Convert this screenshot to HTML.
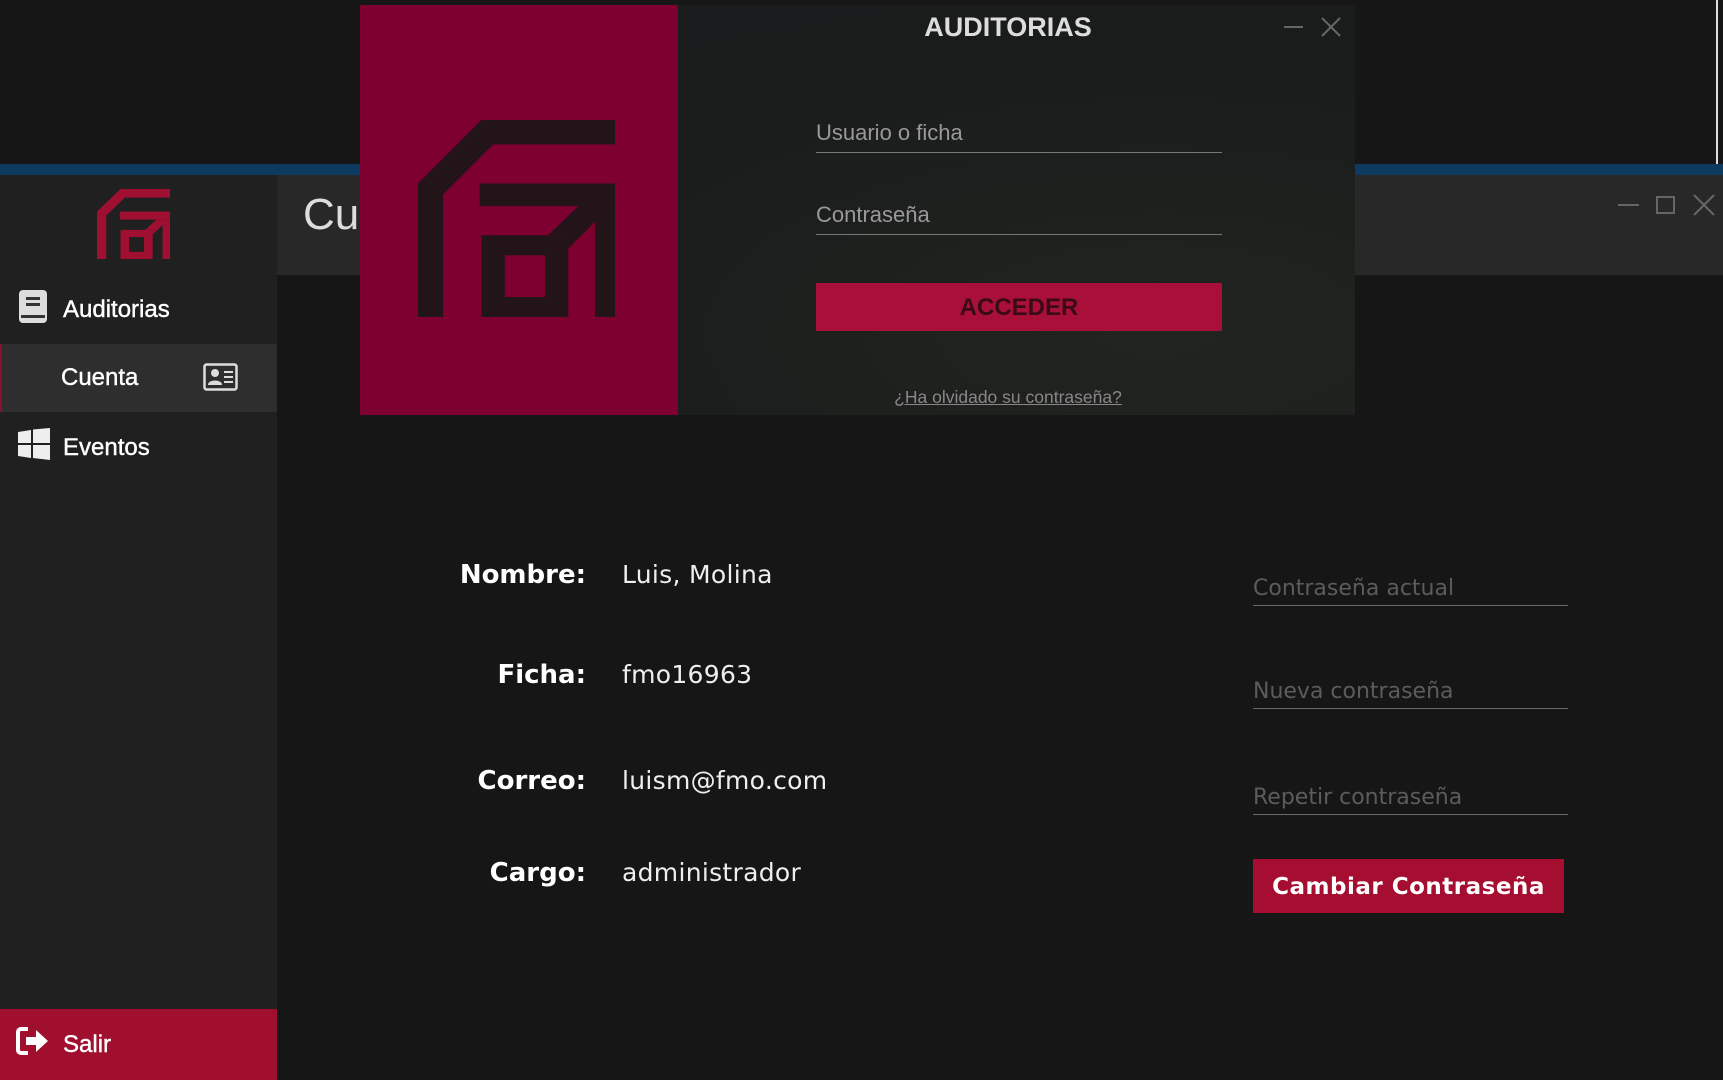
<!DOCTYPE html>
<html><head><meta charset="utf-8"><style>
*{margin:0;padding:0;box-sizing:border-box}
body{width:1723px;height:1080px;background:#161616;position:relative;overflow:hidden;font-family:"Liberation Sans",sans-serif}
.abs{position:absolute}
.lbl{position:absolute;right:1137px;font-family:"DejaVu Sans",sans-serif;font-weight:bold;font-size:26px;color:#fff;line-height:30px}
.val{position:absolute;left:622px;font-family:"DejaVu Sans",sans-serif;font-size:25px;color:#eee;line-height:30px;letter-spacing:0.3px}
.inp{position:absolute;left:1253px;width:315px;border-bottom:1.5px solid #6a6a6a;font-family:"DejaVu Sans",sans-serif;font-size:22px;color:#5c5c5c;line-height:28px;padding-bottom:2px;padding-top:3px}
.nav{position:absolute;left:0;width:277px;color:#fff;font-size:24px;-webkit-text-stroke:0.4px #fff}
</style></head><body>
<svg width="0" height="0" style="position:absolute"><defs><g id="lg">
<polygon points="0,190 190,0 590,0 590,73 225,73 75,223 75,590 0,590"/>
<rect x="185" y="190" width="405" height="68"/>
<path fill-rule="evenodd" d="M190 345H450V590H190Z M260 405V530H380V405Z"/>
<polygon points="390,345 480,258 590,258 590,590 530,590 530,305 450,385 450,345"/>
</g></defs></svg>
<div class="abs" style="left:0;top:0;width:1723px;height:165px;background:#161616"></div>
<div class="abs" style="left:1716px;top:0;width:2px;height:165px;background:#ddd"></div>
<div class="abs" style="left:0;top:164px;width:1723px;height:11px;background:#0e3a60"></div>
<!-- sidebar -->
<div class="abs" style="left:0;top:175px;width:277px;height:905px;background:#202020"></div>
<svg class="abs" style="left:97px;top:189px" width="73" height="70" viewBox="0 0 590 590" preserveAspectRatio="none"><use href="#lg" fill="#9e0f31"/></svg>
<svg class="abs" style="left:18px;top:289px" width="32" height="36" viewBox="0 0 32 36"><rect x="1" y="1" width="28" height="33" rx="4" fill="#ddd"/><rect x="8" y="8" width="14" height="3" fill="#333"/><rect x="8" y="14" width="14" height="3" fill="#333"/><rect x="3" y="26" width="24" height="3" fill="#333"/></svg>
<div class="nav" style="left:63px;top:296px">Auditorias</div>
<div class="abs" style="left:0;top:344px;width:277px;height:68px;background:#2e2e2e;border-left:2px solid #8a1030"></div>
<div class="nav" style="left:61px;top:364px">Cuenta</div>
<svg class="abs" style="left:203px;top:363px" width="35" height="28" viewBox="0 0 35 28"><rect x="1.5" y="1.5" width="32" height="25" rx="2" fill="none" stroke="#ddd" stroke-width="2.5"/><circle cx="12" cy="10" r="4" fill="#ddd"/><path d="M5 22c0-6 14-6 14 0z" fill="#ddd"/><rect x="21" y="8" width="9" height="2" fill="#ddd"/><rect x="21" y="13" width="9" height="2" fill="#ddd"/><rect x="21" y="18" width="9" height="2" fill="#ddd"/></svg>
<svg class="abs" style="left:18px;top:428px" width="32" height="32" viewBox="0 0 32 32" fill="#eee"><polygon points="0,4 13,2 13,15 0,15"/><polygon points="15,1.5 32,0 32,15 15,15"/><polygon points="0,17 13,17 13,30 0,28"/><polygon points="15,17 32,17 32,32 15,30"/></svg>
<div class="nav" style="left:63px;top:434px">Eventos</div>
<div class="abs" style="left:0;top:1009px;width:277px;height:71px;background:#a0102e"></div>
<svg class="abs" style="left:16px;top:1026px" width="34" height="30" viewBox="0 0 34 30"><path d="M12 3H5a3 3 0 0 0-3 3v18a3 3 0 0 0 3 3h7" fill="none" stroke="#fff" stroke-width="4"/><path d="M10 11h10V4l12 11-12 11v-7H10z" fill="#fff"/></svg>
<div class="nav" style="left:63px;top:1031px">Salir</div>
<!-- header -->
<div class="abs" style="left:277px;top:175px;width:1446px;height:100px;background:#282828"></div>
<div class="abs" style="left:303px;top:190px;font-size:44px;color:#ddd">Cuenta</div>
<div class="abs" style="left:1618px;top:204px;width:21px;height:2px;background:#666"></div>
<div class="abs" style="left:1656px;top:196px;width:19px;height:18px;border:2px solid #666"></div>
<svg class="abs" style="left:1693px;top:194px" width="22" height="22"><path d="M1 1L21 21M21 1L1 21" stroke="#666" stroke-width="2"/></svg>
<!-- form -->
<div class="lbl" style="top:560px">Nombre:</div><div class="val" style="top:560px">Luis, Molina</div>
<div class="lbl" style="top:660px">Ficha:</div><div class="val" style="top:660px">fmo16963</div>
<div class="lbl" style="top:766px">Correo:</div><div class="val" style="top:766px">luism@fmo.com</div>
<div class="lbl" style="top:858px">Cargo:</div><div class="val" style="top:858px">administrador</div>
<div class="inp" style="top:572px">Contraseña actual</div>
<div class="inp" style="top:675px">Nueva contraseña</div>
<div class="inp" style="top:781px">Repetir contraseña</div>
<div class="abs" style="left:1253px;top:859px;width:311px;height:54px;background:#a50d31;color:#fff;font-family:'DejaVu Sans',sans-serif;font-weight:bold;font-size:23px;text-align:center;line-height:56px;letter-spacing:0.5px">Cambiar Contraseña</div>
<!-- login overlay -->
<div class="abs" style="left:360px;top:5px;width:995px;height:410px;background:radial-gradient(ellipse at 80% 80%,#222420,#1a1c1c 60%,#181a1b)"></div>
<div class="abs" style="left:360px;top:5px;width:318px;height:410px;background:#7d0030"></div>
<svg class="abs" style="left:418px;top:120px" width="197" height="197" viewBox="0 0 590 590"><use href="#lg" fill="#231419"/></svg>
<div class="abs" style="left:808px;top:12px;width:400px;text-align:center;font-size:27px;font-weight:bold;color:#ddd">AUDITORIAS</div>
<div class="abs" style="left:1284px;top:26px;width:19px;height:1.5px;background:#666"></div>
<svg class="abs" style="left:1321px;top:17px" width="20" height="20"><path d="M1 1L19 19M19 1L1 19" stroke="#666" stroke-width="2"/></svg>
<div class="abs" style="left:816px;top:120px;width:406px;border-bottom:1.5px solid #777;font-size:22px;color:#999;padding-bottom:6px">Usuario o ficha</div>
<div class="abs" style="left:816px;top:202px;width:406px;border-bottom:1.5px solid #777;font-size:22px;color:#999;padding-bottom:6px">Contraseña</div>
<div class="abs" style="left:816px;top:283px;width:406px;height:48px;background:#a8103a;color:#3a0a16;font-weight:bold;font-size:24px;text-align:center;line-height:50px">ACCEDER</div>
<div class="abs" style="left:808px;top:387px;width:400px;text-align:center;font-size:17.5px;color:#888;text-decoration:underline">¿Ha olvidado su contraseña?</div>
</body></html>
